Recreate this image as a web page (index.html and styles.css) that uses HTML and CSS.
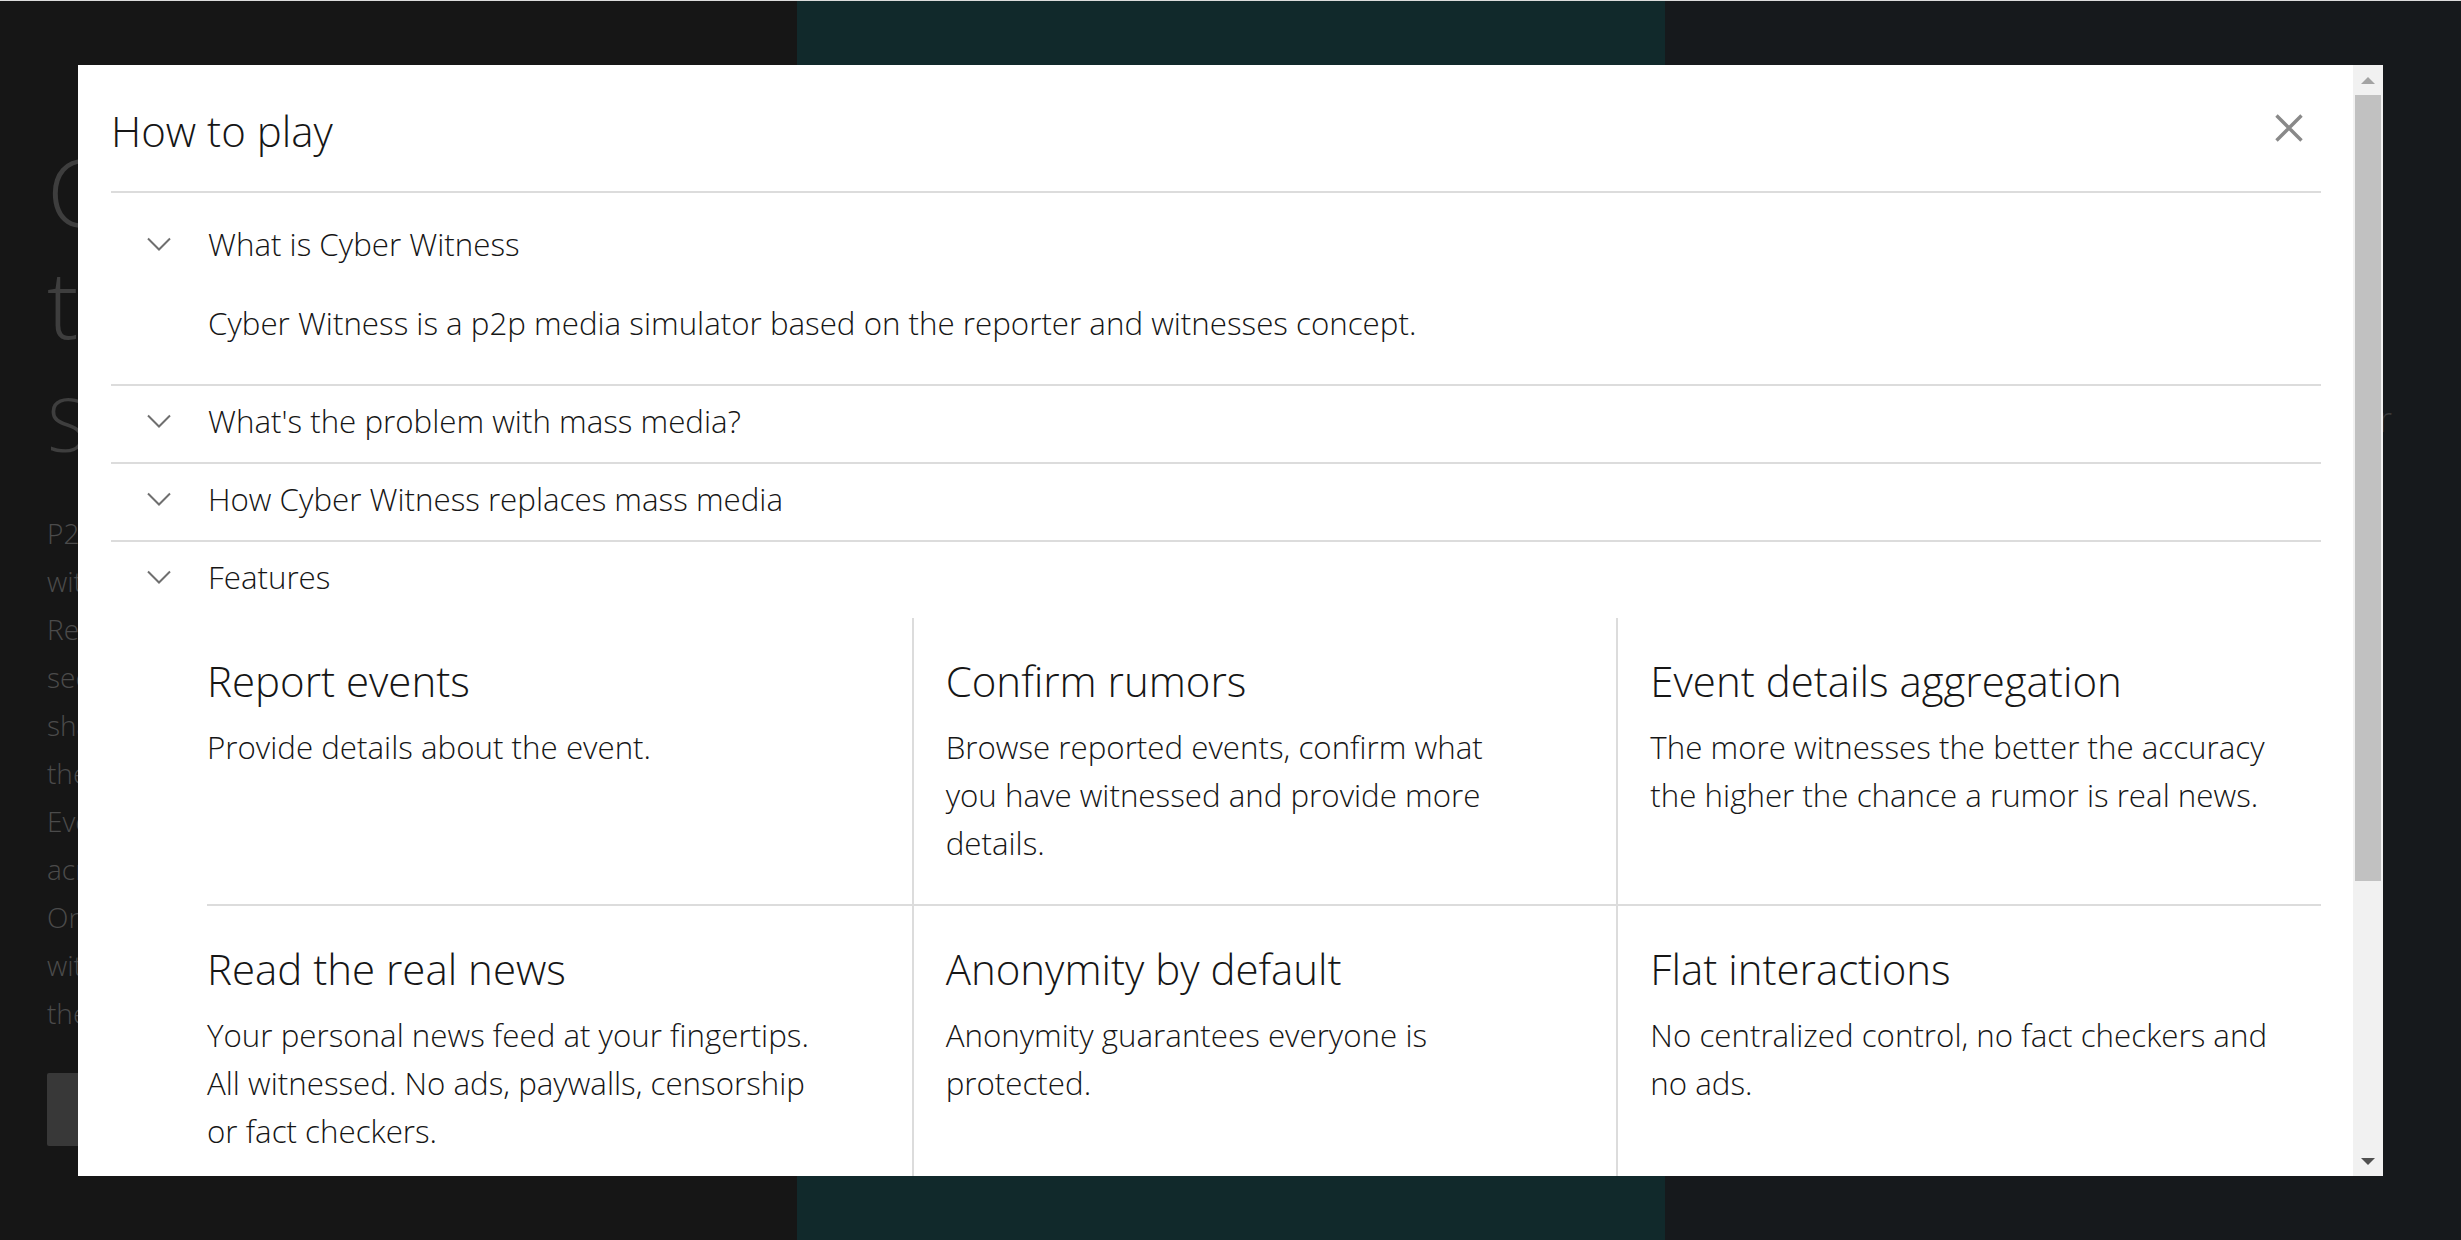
FILE: index.html
```html
<!DOCTYPE html>
<html lang="en">
<head>
<meta charset="utf-8">
<title>How to play</title>
<link rel="stylesheet" href="styles.css">
</head>
<body>
<main class="page">
  <section class="hero">
    <h1 class="hero-title"><span>Cyber Witness</span><span>the real news</span></h1>
    <h2 class="hero-sub">Simulator</h2>
    <p class="hero-text">
      <span>P2P media simulator based</span>
      <span>with reporters and witnesses.</span>
      <span>Report what you have seen,</span>
      <span>see what others report,</span>
      <span>share what you witnessed</span>
      <span>then read the real news.</span>
      <span>Every event is confirmed</span>
      <span>across many witnesses.</span>
      <span>One place to read news</span>
      <span>without ads, paywalls or</span>
      <span>the fact checkers.</span>
    </p>
    <a class="hero-btn" href="#"><span class="hero-btn-label">Play</span></a>
  </section>
  <section class="stage"></section>
  <section class="side"><span class="side-text">reporter</span></section>
</main>

<div class="modal" role="dialog" aria-label="How to play">
  <div class="modal-main">
    <header class="modal-header">
      <h2 class="modal-title">How to play</h2>
      <button class="close-btn" aria-label="Close">
        <svg width="28" height="28" viewBox="0 0 28 28"><path d="M1.5 1.5 26.5 26.5 M26.5 1.5 1.5 26.5" fill="none" stroke="#898989" stroke-width="3.4"/></svg>
      </button>
    </header>
    <ul class="accordion">
      <li class="acc-item">
        <div class="acc-head">
          <svg class="chev" viewBox="0 0 24 14"><path d="M1 1.5 12 12.5 23 1.5" fill="none" stroke="#6f6f6f" stroke-width="2"/></svg>
          <span>What is Cyber Witness</span>
        </div>
        <p class="acc-body">Cyber Witness is a p2p media simulator based on the reporter and witnesses concept.</p>
      </li>
      <li class="acc-item">
        <div class="acc-head">
          <svg class="chev" viewBox="0 0 24 14"><path d="M1 1.5 12 12.5 23 1.5" fill="none" stroke="#6f6f6f" stroke-width="2"/></svg>
          <span>What's the problem with mass media?</span>
        </div>
      </li>
      <li class="acc-item">
        <div class="acc-head">
          <svg class="chev" viewBox="0 0 24 14"><path d="M1 1.5 12 12.5 23 1.5" fill="none" stroke="#6f6f6f" stroke-width="2"/></svg>
          <span>How Cyber Witness replaces mass media</span>
        </div>
      </li>
      <li class="acc-item acc-last">
        <div class="acc-head">
          <svg class="chev" viewBox="0 0 24 14"><path d="M1 1.5 12 12.5 23 1.5" fill="none" stroke="#6f6f6f" stroke-width="2"/></svg>
          <span>Features</span>
        </div>
        <div class="features">
          <div class="feature">
            <h3>Report events</h3>
            <p>Provide details about the event.</p>
          </div>
          <div class="feature">
            <h3>Confirm rumors</h3>
            <p>Browse reported events, confirm what<br>you have witnessed and provide more<br>details.</p>
          </div>
          <div class="feature">
            <h3>Event details aggregation</h3>
            <p>The more witnesses the better the accuracy<br>the higher the chance a rumor is real news.</p>
          </div>
          <div class="feature">
            <h3>Read the real news</h3>
            <p>Your personal news feed at your fingertips.<br>All witnessed. No ads, paywalls, censorship<br>or fact checkers.</p>
          </div>
          <div class="feature">
            <h3>Anonymity by default</h3>
            <p>Anonymity guarantees everyone is<br>protected.</p>
          </div>
          <div class="feature">
            <h3>Flat interactions</h3>
            <p>No centralized control, no fact checkers and<br>no ads.</p>
          </div>
        </div>
      </li>
    </ul>
  </div>
  <div class="scrollbar" aria-hidden="true">
    <div class="sb-btn sb-up"></div>
    <div class="sb-thumb"></div>
    <div class="sb-track"></div>
    <div class="sb-btn sb-down"></div>
  </div>
</div>
</body>
</html>
```
FILE: styles.css
```css
* { box-sizing: border-box; }

html, body {
  margin: 0;
  height: 100%;
}

body {
  font-family: "Open Sans", "Noto Sans", sans-serif;
  font-weight: 300;
  background: #161616;
  border-top: 1px solid #dcdcdc;
  overflow: hidden;
}

.page {
  display: grid;
  grid-template-columns: 797px 868px 1fr;
  height: 1239px;
}

.hero {
  background: #161616;
  padding-left: 47px;
  white-space: nowrap;
  overflow: hidden;
}

.hero-title {
  margin: 134px 0 0;
  font-size: 94px;
  line-height: 112px;
  font-weight: 200;
  color: #3e3e3e;
}

.hero-title span { display: block; }

.hero-sub {
  margin: 20px 0 0;
  font-size: 73px;
  line-height: 90px;
  font-weight: 200;
  color: #3e3e3e;
}

.hero-text {
  margin: 40px 0 0;
  font-size: 28px;
  line-height: 48px;
  color: #4b4b4b;
}

.hero-text span { display: block; }

.hero-btn {
  display: flex;
  align-items: center;
  margin-top: 36px;
  width: 300px;
  height: 73px;
  padding-left: 80px;
  background: #383838;
  border-radius: 2px;
  color: #5a5a5a;
  font-size: 26px;
  text-decoration: none;
}

.stage { background: #11292b; }

.side {
  background: #16191c;
  padding: 395px 69px 0 0;
  text-align: right;
  font-size: 34px;
  color: #3a3a3a;
}

/* modal */
.modal {
  position: absolute;
  left: 78px;
  top: 65px;
  width: 2305px;
  height: 1111px;
  background: #ffffff;
  display: flex;
}

.modal-main {
  flex: 1;
  min-width: 0;
  overflow: hidden;
  padding: 0 32px 0 33px;
  color: #161616;
}

.modal-header {
  height: 128px;
  border-bottom: 2px solid #dcdcdc;
  display: flex;
  align-items: center;
  justify-content: space-between;
}

.modal-title {
  margin: 0;
  padding-top: 4px;
  font-size: 42px;
  font-weight: 300;
}

.close-btn {
  width: 64px;
  height: 64px;
  padding: 0;
  border: 0;
  background: none;
  display: flex;
  align-items: center;
  justify-content: center;
}

.accordion {
  list-style: none;
  margin: 0;
  padding: 16px 0 0;
}

.acc-item { border-bottom: 2px solid #dcdcdc; }
.acc-item.acc-last { border-bottom: 0; }

.acc-head {
  height: 76px;
  display: flex;
  align-items: center;
  gap: 37px;
  padding: 0 0 6px 36px;
  font-size: 31.3px;
}

.chev {
  width: 24px;
  height: 14px;
  flex: none;
}

.acc-body {
  margin: 0;
  padding: 14px 0 37px 97px;
  font-size: 31.3px;
  line-height: 48px;
}

.features {
  display: grid;
  grid-template-columns: repeat(3, 1fr);
  margin-left: 96px;
}

.feature {
  padding: 37px 32px;
  border-left: 2px solid #dcdcdc;
}

.feature:nth-child(3n+1) {
  padding-left: 0;
  border-left: 0;
}

.feature:nth-child(-n+3) { border-bottom: 2px solid #dcdcdc; }

.feature h3 {
  margin: 0 0 16px;
  font-size: 42px;
  line-height: 52px;
  font-weight: 300;
}

.feature p {
  margin: 0;
  font-size: 31.3px;
  line-height: 48px;
}

/* scrollbar */
.scrollbar {
  width: 30px;
  flex: none;
  background: #f1f1f1;
  display: flex;
  flex-direction: column;
}

.sb-btn {
  height: 30px;
  flex: none;
  display: flex;
  align-items: center;
  justify-content: center;
}

.sb-up::before {
  content: "";
  border-left: 7px solid transparent;
  border-right: 7px solid transparent;
  border-bottom: 7px solid #a3a3a3;
}

.sb-down::before {
  content: "";
  border-left: 7px solid transparent;
  border-right: 7px solid transparent;
  border-top: 7px solid #505050;
}

.sb-thumb {
  height: 786px;
  flex: none;
  margin: 0 2px;
  background: #c1c1c1;
}

.sb-track { flex: 1; }
```
